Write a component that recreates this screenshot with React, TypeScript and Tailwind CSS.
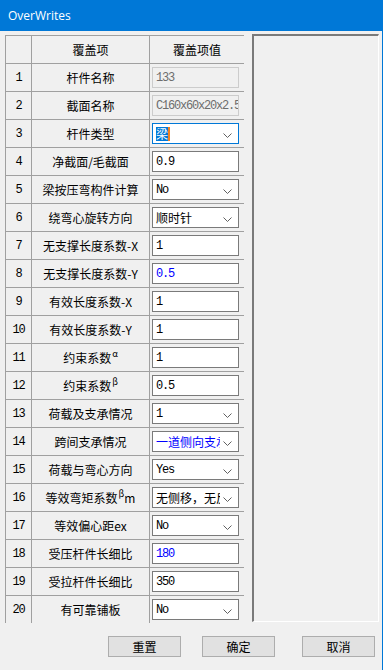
import React from 'react';

type Row = {
  label: React.ReactNode;
  value: string;
  kind: 'input' | 'select' | 'disabled' | 'focus';
  blue?: boolean;
};

const sup = (s: string) => <span className="text-[9px] relative top-[-4px] ml-[1px]">{s}</span>;

const ROWS: Row[] = [
  { label: '杆件名称', value: '133', kind: 'disabled' },
  { label: '截面名称', value: 'C160x60x20x2.5', kind: 'disabled' },
  { label: '杆件类型', value: '梁', kind: 'focus' },
  { label: '净截面/毛截面', value: '0.9', kind: 'input' },
  { label: '梁按压弯构件计算', value: 'No', kind: 'select' },
  { label: '绕弯心旋转方向', value: '顺时针', kind: 'select' },
  { label: '无支撑长度系数-X', value: '1', kind: 'input' },
  { label: '无支撑长度系数-Y', value: '0.5', kind: 'input', blue: true },
  { label: '有效长度系数-X', value: '1', kind: 'input' },
  { label: '有效长度系数-Y', value: '1', kind: 'input' },
  { label: <>约束系数{sup('α')}</>, value: '1', kind: 'input' },
  { label: <>约束系数{sup('β')}</>, value: '0.5', kind: 'input' },
  { label: '荷载及支承情况', value: '1', kind: 'select' },
  { label: '跨间支承情况', value: '一道侧向支承', kind: 'select', blue: true },
  { label: '荷载与弯心方向', value: 'Yes', kind: 'select' },
  { label: <>等效弯矩系数{sup('β')}m</>, value: '无侧移，无反弯点', kind: 'select' },
  { label: '等效偏心距ex', value: 'No', kind: 'select' },
  { label: '受压杆件长细比', value: '180', kind: 'input', blue: true },
  { label: '受拉杆件长细比', value: '350', kind: 'input' },
  { label: '有可靠铺板', value: 'No', kind: 'select' },
];

const cell = 'h-[28px] border-l border-t border-[#a0a0a0] border-r-white border-b-white flex items-center';

// ascii values look like the fixed-width dialog font
const isAscii = (s: string) => /^[\x00-\x7f]*$/.test(s);
const mono = "font-['Liberation_Mono',monospace] tracking-[-1.2px]";

const Chevron = () => (
  <svg width="9" height="5" viewBox="0 0 9 5" className="absolute right-[6px] top-[9px]">
    <path d="M0.5 0.5 L4.5 4.5 L8.5 0.5" fill="none" stroke="#606060" strokeWidth="1" />
  </svg>
);

const ValueBox: React.FC<{ row: Row }> = ({ row }) => {
  const base = 'relative w-[87px] h-[21px] flex items-center pl-[3px] overflow-hidden whitespace-nowrap';
  const font = isAscii(row.value) ? mono : '';
  if (row.kind === 'disabled') {
    return (
      <div className={`${base} border border-[#cccccc] bg-[#f0f0f0] text-[#6d6d6d] ${font}`}>
        {row.value}
      </div>
    );
  }
  if (row.kind === 'focus') {
    return (
      <div className={`${base} border border-[#0078d7] bg-white`}>
        <span className="bg-[#0078d7] text-white leading-[14px]">{row.value}</span>
        <span className="w-[2px] h-[14px] bg-[#f08020]" />
        <Chevron />
      </div>
    );
  }
  return (
    <div className={`${base} border border-[#7a7a7a] bg-white ${row.blue ? 'text-[#0000ff]' : 'text-black'}`}>
      <span className={`${font} ${row.kind === 'select' ? 'w-[64px] overflow-hidden' : ''}`}>{row.value}</span>
      {row.kind === 'select' && <Chevron />}
    </div>
  );
};

const Btn: React.FC<{ label: string; className?: string }> = ({ label, className }) => (
  <button className={`w-[73px] h-[21px] bg-[#e1e1e1] border border-[#adadad] text-[12px] text-black leading-none ${className ?? ''}`}>
    {label}
  </button>
);

export default function App() {
  return (
    <div
      className="w-[383px] h-[670px] bg-[#f0f0f0] flex flex-col border-r border-[#0078d7] text-[12px] text-black"
      style={{ fontFamily: "'Noto Sans CJK SC', 'Noto Sans', sans-serif" }}
    >
      <div
        className="h-[31px] shrink-0 bg-[#0078d7] text-white flex items-center pl-[8px] text-[12px]"
        style={{ fontFamily: "'Open Sans', 'Noto Sans', sans-serif" }}
      >
        OverWrites
      </div>

      <div className="flex pl-[5px] pt-[4px]">
        <div className="w-[239px] h-[588px] overflow-hidden">
          <div className="flex">
            <div className={`${cell} w-[26px]`} />
            <div className={`${cell} w-[118px] justify-center`}>覆盖项</div>
            <div className={`${cell} w-[95px] justify-center`}>覆盖项值</div>
          </div>
          {ROWS.map((row, i) => (
            <div key={i} className="flex">
              <div className={`${cell} w-[26px] justify-center ${mono}`}>{i + 1}</div>
              <div className={`${cell} w-[118px] justify-center whitespace-nowrap`}>{row.label}</div>
              <div className={`${cell} w-[95px] pl-[2px]`}>
                <ValueBox row={row} />
              </div>
            </div>
          ))}
        </div>

        <div className="ml-[8px] mt-[-1px] w-[127px] h-[588px] border-l-2 border-t-2 border-[#7a7a7a] border-r border-b border-r-white border-b-white bg-[#f0f0f0]" />
      </div>

      <div className="flex pt-[13px] pl-[108px]">
        <Btn label="重置" />
        <Btn label="确定" className="ml-[21px]" />
        <Btn label="取消" className="ml-[27px]" />
      </div>
    </div>
  );
}
